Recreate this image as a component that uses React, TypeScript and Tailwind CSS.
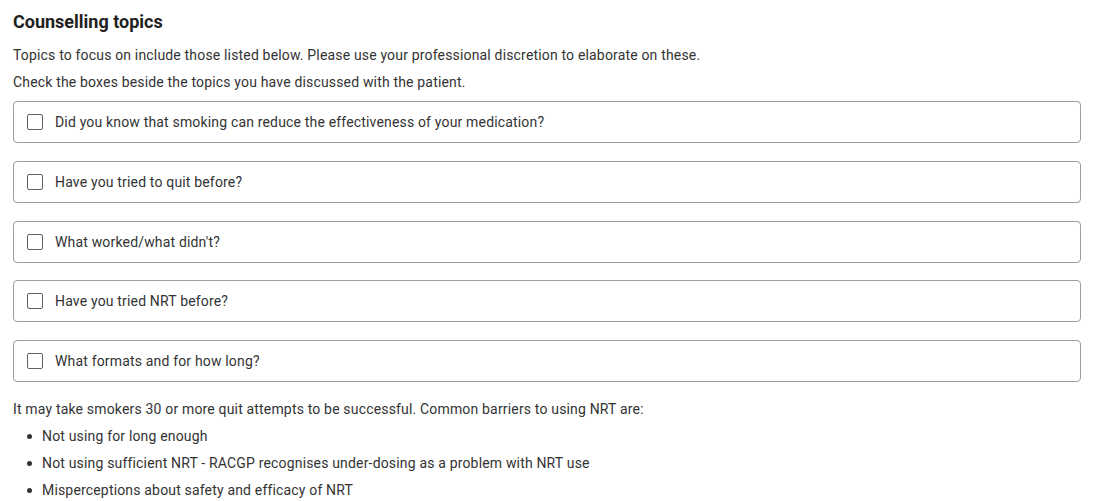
const topics = [
  'Did you know that smoking can reduce the effectiveness of your medication?',
  'Have you tried to quit before?',
  "What worked/what didn't?",
  'Have you tried NRT before?',
  'What formats and for how long?',
]

const barriers = [
  'Not using for long enough',
  'Not using sufficient NRT - RACGP recognises under-dosing as a problem with NRT use',
  'Misperceptions about safety and efficacy of NRT',
]

export default function App() {
  return (
    <div
      className="bg-white min-h-screen pl-[13px] pr-[36px] pt-[10px] text-[#333333] tracking-[0.17px]"
      style={{ fontFamily: 'Roboto, "Liberation Sans", sans-serif' }}
    >
      <h2 className="text-[18px] leading-6 font-bold text-[#212121] tracking-normal">Counselling topics</h2>
      <p className="mt-[11px] text-sm leading-5">
        Topics to focus on include those listed below. Please use your professional discretion to elaborate on these.
      </p>
      <p className="mt-[7px] text-sm leading-5">
        Check the boxes beside the topics you have discussed with the patient.
      </p>

      <div className="mt-[9px] flex flex-col gap-[17.75px]">
        {topics.map((topic) => (
          <label
            key={topic}
            className="flex items-center gap-3 h-[42px] border border-[#9e9e9e] rounded pl-[13px] cursor-pointer"
          >
            <span className="w-4 h-4 border-[1.5px] border-[#616161] rounded-[2px] shrink-0" />
            <span className="text-sm leading-5">{topic}</span>
          </label>
        ))}
      </div>

      <p className="mt-[17px] text-sm leading-5">
        It may take smokers 30 or more quit attempts to be successful. Common barriers to using NRT are:
      </p>
      <ul className="flex flex-col gap-[7px] mt-[7px]">
        {barriers.map((item) => (
          <li key={item} className="flex items-center text-sm leading-5">
            <span className="w-[5px] h-[5px] rounded-full bg-[#333333] ml-[14px] mr-[10px] shrink-0" />
            {item}
          </li>
        ))}
      </ul>
    </div>
  )
}
